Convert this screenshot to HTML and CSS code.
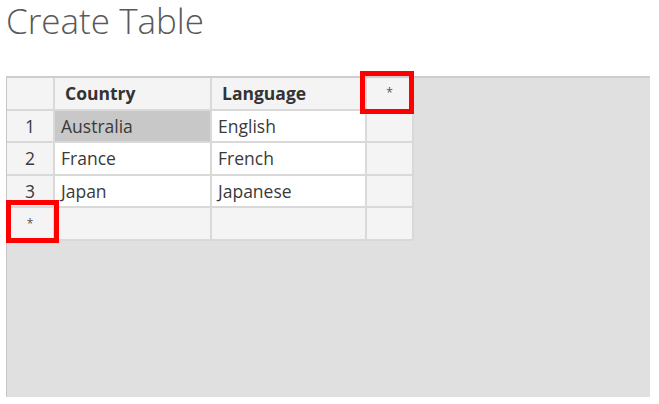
FILE: index.html
```html
<!DOCTYPE html>
<html>
<head>
<meta charset="utf-8">
<link rel="stylesheet" href="styles.css">
</head>
<body>
<h1 class="title">Create Table</h1>
<div class="panel">
  <div class="grid">
    <div class="cell hdr corner"></div>
    <div class="cell hdr">Country</div>
    <div class="cell hdr">Language</div>
    <div class="cell hdr star">*</div>

    <div class="cell num">1</div>
    <div class="cell data selected">Australia</div>
    <div class="cell data">English</div>
    <div class="cell gray"></div>

    <div class="cell num">2</div>
    <div class="cell data">France</div>
    <div class="cell data">French</div>
    <div class="cell gray"></div>

    <div class="cell num">3</div>
    <div class="cell data">Japan</div>
    <div class="cell data">Japanese</div>
    <div class="cell gray"></div>

    <div class="cell num newrow">*</div>
    <div class="cell gray"></div>
    <div class="cell gray"></div>
    <div class="cell gray"></div>
  </div>
  <div class="mark mark-col"></div>
  <div class="mark mark-row"></div>
</div>
</body>
</html>
```
FILE: styles.css
```css
html, body {
  margin: 0;
  padding: 0;
  background: #ffffff;
  font-family: "Open Sans", "Noto Sans", sans-serif;
}
.title {
  margin: 0;
  padding: 0 0 0 6px;
  height: 76px;
  font-family: "Open Sans", "Noto Sans", sans-serif;
  font-weight: 300;
  font-size: 35px;
  line-height: 42px;
  color: #595959;
}
.panel {
  position: relative;
  margin-left: 6px;
  width: 643px;
  height: 319px;
  background: #e0e0e0;
  border-top: 2px solid #cdcdcd;
  border-left: 1px solid #c6c6c6;
}
.grid {
  display: inline-grid;
  grid-template-columns: 46px 155px 153px 45px;
  grid-auto-rows: 30.5px;
  gap: 2px;
  padding: 0 2px 2px 0;
  background: #d9d9d9;
}
.cell {
  display: flex;
  align-items: center;
  font-size: 17.5px;
  color: #3a3a3a;
  background: #f4f4f4;
  white-space: nowrap;
}
.hdr {
  font-weight: 700;
  padding-left: 10px;
  color: #333333;
}
.corner { padding-left: 0; }
.data {
  background: #ffffff;
  padding-left: 6px;
}
.data.selected { background: #c8c8c8; }
.num { justify-content: center; }
.star {
  justify-content: center;
  padding-left: 0;
  font-weight: 400;
  font-size: 12px;
  align-items: flex-start;
  padding-top: 6px;
  color: #555555;
}
.newrow {
  font-size: 12px;
  color: #555555;
}
.gray { background: #f4f4f4; }
.mark {
  position: absolute;
  border: 5px solid #ff0000;
  box-sizing: border-box;
}
.mark-col {
  left: 353px;
  top: -7px;
  width: 54px;
  height: 43px;
}
.mark-row {
  left: -1px;
  top: 122px;
  width: 53px;
  height: 43px;
}
```
